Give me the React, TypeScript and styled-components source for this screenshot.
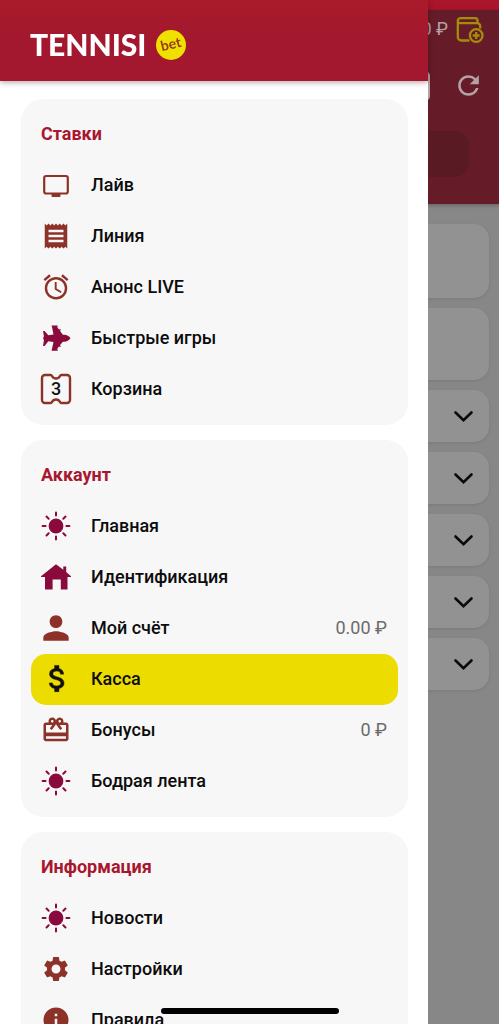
import React from "react";
import styled, { createGlobalStyle } from "styled-components";
import {
  MdReceipt,
  MdAlarm,
  MdPerson,
  MdOutlineRedeem,
  MdSettings,
  MdInfo,
  MdRefresh,
} from "react-icons/md";

const BROWN = "#8c3229";
const WINE = "#8b0a3d";

const GlobalStyle = createGlobalStyle`
  *, *::before, *::after { box-sizing: border-box; }
  body {
    margin: 0;
    background: #878787;
    font-family: Roboto, "Liberation Sans", sans-serif;
  }
`;

const Screen = styled.div`
  min-height: 100vh;
  overflow: hidden;
`;

/* ---------- page under the drawer ---------- */

const StatusStrip = styled.div`
  height: 10px;
  background: #a9152a;
`;

const PageHeader = styled.header`
  height: 194px;
  padding: 5px 15px 0 10px;
  background: #651c28;
  box-shadow: 0 1px 4px rgba(0, 0, 0, 0.3);
`;

const BalanceRow = styled.div`
  display: flex;
  align-items: center;
  justify-content: flex-end;
  gap: 8px;
  height: 30px;
  font-size: 18px;
  line-height: 26px;
  color: #b5a2a5;
`;

const Balance = styled.span`
  padding-bottom: 2px;
`;

const SearchRow = styled.div`
  display: flex;
  align-items: center;
  gap: 23px;
  margin-top: 25px;
`;

const SearchField = styled.input`
  flex: 1;
  min-width: 0;
  height: 30px;
  border: 2px solid #b5a2a5;
  border-radius: 5px;
  background: transparent;
`;

const IconButton = styled.button<{ $color?: string }>`
  display: flex;
  padding: 0;
  border: 0;
  background: none;
  color: ${(p) => p.$color ?? "#b5a2a5"};
`;

const Promo = styled.div`
  height: 46px;
  margin: 30px 15px 0 0;
  border-radius: 15px;
  background: #591a23;
`;

const PageBody = styled.main`
  display: flex;
  flex-direction: column;
  gap: 10px;
  padding: 20px 10px;
`;

const Panel = styled.section<{ $height: number }>`
  display: flex;
  align-items: center;
  justify-content: flex-end;
  height: ${(p) => p.$height}px;
  padding-right: 14px;
  border-radius: 15px;
  background: #929292;
  box-shadow: 0 1px 3px rgba(0, 0, 0, 0.1);
`;

/* ---------- drawer ---------- */

const Drawer = styled.aside`
  position: fixed;
  inset: 0 71px 0 0;
  display: flex;
  flex-direction: column;
  background: #fff;
`;

const DrawerHeader = styled.div`
  display: flex;
  align-items: center;
  flex: none;
  gap: 10px;
  height: 81px;
  padding: 8px 30px 0;
  background: linear-gradient(#a91b2a, #a3182f 50%);
  box-shadow: 0 1px 6px rgba(60, 0, 10, 0.4);
  z-index: 1;
`;

const Wordmark = styled.span`
  font-family: Lato, "Open Sans", sans-serif;
  font-weight: 900;
  font-size: 30px;
  line-height: 28px;
  padding-bottom: 2px;
  color: #fff;
`;

const Ball = styled.svg`
  width: 30px;
  height: 30px;
`;

const Groups = styled.nav`
  display: flex;
  flex-direction: column;
  flex: 1;
  gap: 15px;
  min-height: 0;
  padding: 18px 20px 0 21px;
  overflow: hidden;
`;

const Group = styled.section`
  flex: none;
  padding: 10px;
  border-radius: 22px;
  background: #f7f7f7;
`;

const GroupTitle = styled.h2`
  height: 51px;
  margin: 0;
  padding: 0 10px;
  font-size: 18px;
  font-weight: 700;
  line-height: 50px;
  color: #a8172f;
`;

const Item = styled.a<{ $active?: boolean }>`
  display: flex;
  align-items: center;
  gap: 20px;
  height: 51px;
  padding: 0 11px 2px 10px;
  border-radius: 15px;
  background: ${(p) => (p.$active ? "#ecdc00" : "transparent")};
  color: #0c0c0c;
  font-size: 18px;
  font-weight: 500;
  line-height: 24px;
  text-decoration: none;
`;

const IconBox = styled.span<{ $color: string }>`
  display: flex;
  align-items: center;
  justify-content: center;
  width: 30px;
  height: 30px;
  color: ${(p) => p.$color};

  svg {
    flex: none;
  }
`;

const Amount = styled.span`
  margin-left: auto;
  font-weight: 400;
  color: #6b6b6b;
`;

const HomeBar = styled.div`
  position: fixed;
  bottom: 10px;
  left: 50%;
  width: 178px;
  height: 6px;
  margin-left: -89px;
  border-radius: 3px;
  background: #000;
  z-index: 2;
`;

/* ---------- icons ---------- */

const Monitor = () => (
  <svg width="30" height="30" viewBox="0 0 30 30" fill="none">
    <rect x="3.200" y="6" width="23.600" height="17.500" rx="2" stroke="currentColor" strokeWidth="2.200" />
    <path d="M10.500 23.500h9V26a1 1 0 0 1-1 1h-7a1 1 0 0 1-1-1z" fill="currentColor" />
  </svg>
);

const Sun = () => (
  <svg width="30" height="30" viewBox="0 0 30 30" fill="none">
    <circle cx="15" cy="15" r="7.400" fill="currentColor" />
    <path
      d="M15 1.600v3M15 25.400v3M1.600 15h3M25.400 15h3M5.500 5.500l2.200 2.200M22.300 22.300l2.200 2.200M5.500 24.500l2.200-2.200M22.300 7.700l2.200-2.200"
      stroke="currentColor"
      strokeWidth="2"
      strokeLinecap="round"
    />
  </svg>
);

const House = () => (
  <svg width="30" height="30" viewBox="0 0 30 30" fill="currentColor">
    <path d="M15 2.300L22.300 7.800V4.500h2.900v5.600l4.800 4.200v.7h-3.500v12.500h-6.700V17.500h-8.200v10H4V15H0v-.7z" />
  </svg>
);

const Jet = () => (
  <svg width="30" height="30" viewBox="0 0 30 30" fill="currentColor">
    <path d="M29.500 15.200c-1.200-1.900-3.700-3.400-6.300-3.400h-1.300L18.700 7.600h1V6.300h-2L15.900 3.500h.9V2.400h-6.300l.5 1.700 1.500 7.500-5.200.7-3.700-4.200H2l1 5.400-.7.600v2.200l.7.600L2 23h1.600l3.700-4.700 5.200.7L11 25.800l-.5 1.900h6.300v-1.200h-.9l1.800-2.700h2v-1.300h-1l3.200-3.800h1.300c2.600 0 5.100-1.600 6.300-3.500z" />
  </svg>
);

const Dollar = () => (
  <svg width="35" height="35" viewBox="-0.700 0 24 24" fill="currentColor" stroke="currentColor" strokeWidth="0.300">
    <path d="M11.800 10.900c-2.270-.59-3-1.200-3-2.150 0-1.090 1.010-1.850 2.700-1.850 1.780 0 2.440.85 2.500 2.100h2.210c-.07-1.720-1.120-3.300-3.210-3.810V3h-3v2.160c-1.940.42-3.500 1.680-3.500 3.610 0 2.310 1.910 3.460 4.700 4.130 2.500.6 3 1.480 3 2.410 0 .69-.49 1.790-2.700 1.790-2.060 0-2.870-.92-2.980-2.100h-2.200c.12 2.190 1.760 3.420 3.680 3.830V21h3v-2.150c1.950-.37 3.500-1.500 3.500-3.550 0-2.840-2.430-3.810-4.700-4.400z" />
  </svg>
);

const Ticket = () => (
  <svg width="32" height="32" viewBox="0 0 32 32" fill="none">
    <path
      d="M5 2h5.700c.6 0 1 .4 1.300 1 .8 1.600 2.200 2.500 4 2.500s3.200-.9 4-2.500c.3-.6.700-1 1.300-1H27a3 3 0 0 1 3 3v22a3 3 0 0 1-3 3h-5.700c-.6 0-1-.4-1.300-1-.8-1.600-2.200-2.500-4-2.500s-3.200.9-4 2.500c-.3.600-.7 1-1.300 1H5a3 3 0 0 1-3-3V5a3 3 0 0 1 3-3z"
      stroke="currentColor"
      strokeWidth="2.400"
    />
    <text x="16" y="22" textAnchor="middle" fontSize="18" fontWeight="500" fill="#111">
      3
    </text>
  </svg>
);

const Wallet = () => (
  <svg width="28" height="28" viewBox="0 0 28 28" fill="none" stroke="#a68c08" strokeWidth="2.300">
    <path d="M13.500 24.500H5.200a3.400 3.400 0 0 1-3.400-3.400V5.200M24.200 12.500V10.200a3 3 0 0 0-3-3H4.800c-1.800 0-3-1-3-2.500s1.200-2.500 3-2.500h14.400c1.500 0 2.300.9 2.300 2.400v2.500" />
    <circle cx="20.200" cy="19.500" r="6.300" />
    <path d="M20.200 16v7M16.700 19.500h7" />
  </svg>
);

const Chevron = () => (
  <svg width="24" height="24" viewBox="0 0 24 24" fill="none">
    <path d="M4.500 8.500l8 7.700 8-7.700" stroke="currentColor" strokeWidth="2.600" strokeLinecap="round" />
  </svg>
);

/* ---------- data ---------- */

type Entry = {
  label: string;
  icon: React.ReactNode;
  color?: string;
  amount?: string;
  active?: boolean;
};

const groups: { title: string; items: Entry[] }[] = [
  {
    title: "Ставки",
    items: [
      { label: "Лайв", icon: <Monitor /> },
      { label: "Линия", icon: <MdReceipt size={30} /> },
      { label: "Анонс LIVE", icon: <MdAlarm size={30} /> },
      { label: "Быстрые игры", icon: <Jet />, color: WINE },
      { label: "Корзина", icon: <Ticket /> },
    ],
  },
  {
    title: "Аккаунт",
    items: [
      { label: "Главная", icon: <Sun />, color: WINE },
      { label: "Идентификация", icon: <House />, color: WINE },
      { label: "Мой счёт", icon: <MdPerson size={38} />, amount: "0.00 ₽" },
      { label: "Касса", icon: <Dollar />, color: "#111", active: true },
      { label: "Бонусы", icon: <MdOutlineRedeem size={30} />, amount: "0 ₽" },
      { label: "Бодрая лента", icon: <Sun />, color: WINE },
    ],
  },
  {
    title: "Информация",
    items: [
      { label: "Новости", icon: <Sun />, color: WINE },
      { label: "Настройки", icon: <MdSettings size={30} /> },
      { label: "Правила", icon: <MdInfo size={30} /> },
    ],
  },
];

export default function App() {
  return (
    <Screen>
      <GlobalStyle />
      <StatusStrip />
      <PageHeader>
        <BalanceRow>
          <Balance>0 ₽</Balance>
          <IconButton aria-label="Пополнить">
            <Wallet />
          </IconButton>
        </BalanceRow>
        <SearchRow>
          <SearchField aria-label="Поиск" />
          <IconButton aria-label="Обновить">
            <MdRefresh size={31} />
          </IconButton>
        </SearchRow>
        <Promo />
      </PageHeader>
      <PageBody>
        <Panel $height={74} />
        <Panel $height={72} />
        {[1, 2, 3, 4, 5].map((n) => (
          <Panel key={n} $height={52}>
            <IconButton aria-label="Развернуть" $color="#0a0a0a">
              <Chevron />
            </IconButton>
          </Panel>
        ))}
      </PageBody>

      <Drawer>
        <DrawerHeader>
          <Wordmark>TENNISI</Wordmark>
          <Ball viewBox="0 0 30 30">
            <circle cx="15" cy="15" r="15" fill="#f0e000" />
            <text
              x="15"
              y="19"
              textAnchor="middle"
              transform="rotate(-14 15 15)"
              fontFamily="Lato, sans-serif"
              fontWeight="700"
              fontSize="14"
              fill="#963a1c"
            >
              bet
            </text>
          </Ball>
        </DrawerHeader>
        <Groups>
          {groups.map((group) => (
            <Group key={group.title}>
              <GroupTitle>{group.title}</GroupTitle>
              {group.items.map((item) => (
                <Item key={item.label} href="#" $active={item.active}>
                  <IconBox $color={item.color ?? BROWN}>{item.icon}</IconBox>
                  <span>{item.label}</span>
                  {item.amount && <Amount>{item.amount}</Amount>}
                </Item>
              ))}
            </Group>
          ))}
        </Groups>
      </Drawer>
      <HomeBar />
    </Screen>
  );
}
